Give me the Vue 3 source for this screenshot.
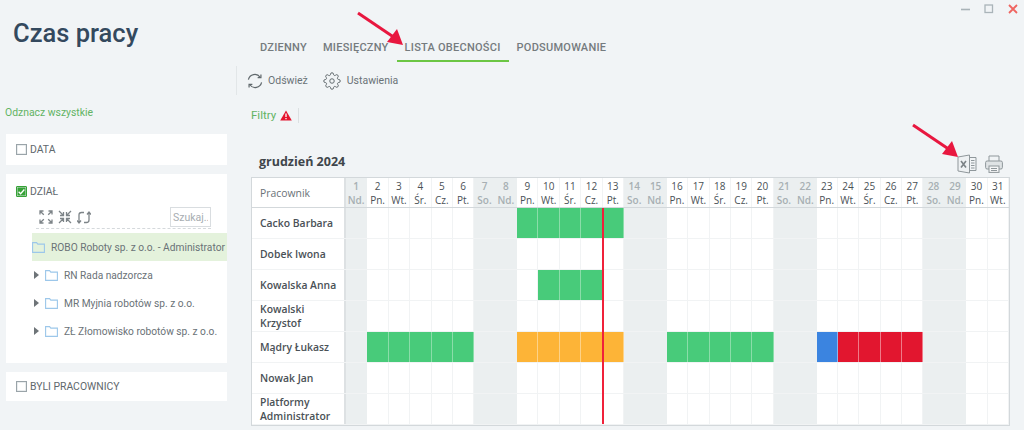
<script setup>
const tabs = ['Dzienny', 'Miesięczny', 'Lista obecności', 'Podsumowanie']
const activeTab = 'Lista obecności'

const weekdays = ['Nd.', 'Pn.', 'Wt.', 'Śr.', 'Cz.', 'Pt.', 'So.']
const days = Array.from({ length: 31 }, (_, i) => {
	const w = i % 7
	return { nr: i + 1, label: weekdays[w], off: w === 0 || w === 6 }
})

const fill = (from, to, color) => {
	const res = {}
	for (let d = from; d <= to; d++) res[d] = color
	return res
}

const rows = [
	{ name: 'Cacko Barbara', marks: fill(9, 13, 'green') },
	{ name: 'Dobek Iwona', marks: {} },
	{ name: 'Kowalska Anna', marks: fill(10, 12, 'green') },
	{ name: 'Kowalski Krzystof', marks: {} },
	{
		name: 'Mądry Łukasz',
		marks: {
			...fill(2, 6, 'green'),
			...fill(9, 13, 'orange'),
			...fill(16, 20, 'green'),
			...fill(23, 23, 'blue'),
			...fill(24, 27, 'red'),
		},
	},
	{ name: 'Nowak Jan', marks: {} },
	{ name: 'Platformy Administrator', marks: {} },
]

const tree = [
	{ text: 'RN Rada nadzorcza' },
	{ text: 'MR Myjnia robotów sp. z o.o.' },
	{ text: 'ZŁ Złomowisko robotów sp. z o.o.' },
]
</script>

<template>
	<div class="page">
		<aside class="side">
			<h1 class="title">Czas pracy</h1>
			<a class="uncheck">Odznacz wszystkie</a>

			<section class="panel panel-small">
				<span class="check"></span>
				<span class="panel-label">DATA</span>
			</section>

			<section class="panel panel-tree">
				<div class="panel-head">
					<span class="check checked">
						<svg width="11" height="11" viewBox="0 0 11 11"><path d="M2 5.800l2.400 2.400L9 3" fill="none" stroke="#fff" stroke-width="1.600" /></svg>
					</span>
					<span class="panel-label">DZIAŁ</span>
				</div>
				<div class="tree-tools">
					<svg width="14" height="14" viewBox="0 0 14 14" fill="none" stroke="#7d8488" stroke-width="1.300">
						<path d="M1 4.500V1h3.500M1.200 1.200l3.600 3.600M9.500 1H13v3.500M12.800 1.200L9.200 4.800M1 9.500V13h3.500M1.200 12.800l3.600-3.600M13 9.500V13H9.500M12.800 12.800L9.200 9.200" />
					</svg>
					<svg width="14" height="14" viewBox="0 0 14 14" fill="none" stroke="#7d8488" stroke-width="1.300">
						<path d="M5.500 2v3.500H2M1 1l4.500 4.500M8.500 2v3.500H12M13 1L8.500 5.500M5.500 12V8.500H2M1 13l4.500-4.500M8.500 12V8.500H12M13 13L8.500 8.500" />
					</svg>
					<svg width="14" height="15" viewBox="0 0 14 15" fill="none" stroke="#7d8488" stroke-width="1.300">
						<path d="M7 2.500H4.500A2.500 2.500 0 0 0 2 5v8M0 10.500l2 2.500 2-2.500M7 12.500h2.500A2.500 2.500 0 0 0 12 10V2M10 4.500L12 2l2 2.500" />
					</svg>
					<input class="tree-search" placeholder="Szukaj..." />
				</div>
				<div class="tree-row tree-selected">
					<svg class="folder" width="13" height="11" viewBox="0 0 13 11"><path d="M0.600 10.400V0.600h4l1.200 1.500h6.600v8.300z" fill="none" stroke="#9cc7ea" stroke-width="1.100" /></svg>
					<span class="tree-text">ROBO Roboty sp. z o.o. - Administrator</span>
				</div>
				<div v-for="item in tree" :key="item.text" class="tree-row tree-child">
					<span class="caret"></span>
					<svg class="folder" width="13" height="11" viewBox="0 0 13 11"><path d="M0.600 10.400V0.600h4l1.200 1.500h6.600v8.300z" fill="none" stroke="#9cc7ea" stroke-width="1.100" /></svg>
					<span class="tree-text">{{ item.text }}</span>
				</div>
			</section>

			<section class="panel panel-small panel-last">
				<span class="check"></span>
				<span class="panel-label">BYLI PRACOWNICY</span>
			</section>
		</aside>

		<main class="main">
			<div class="win-bar">
				<svg width="12" height="12" viewBox="0 0 12 12"><path d="M2 6.500h9" stroke="#a9b3b8" stroke-width="1.600" /></svg>
				<svg width="12" height="12" viewBox="0 0 12 12"><rect x="2" y="2" width="7.500" height="7.500" fill="none" stroke="#aab4b9" stroke-width="1.300" /></svg>
				<svg width="12" height="12" viewBox="0 0 12 12"><path d="M2 2l8 8M10 2l-8 8" stroke="#ef6560" stroke-width="1.800" /></svg>
			</div>

			<nav class="tabs">
				<a v-for="tab in tabs" :key="tab" class="tab" :class="{ active: tab === activeTab }">{{ tab }}</a>
			</nav>

			<div class="toolbar">
				<button class="tool">
					<svg width="16" height="16" viewBox="0 0 17 17" fill="none" stroke="#60686c" stroke-width="1.300">
						<path d="M1.500 7A7 7 0 0 1 14 4.500M15.500 10A7 7 0 0 1 3 12.500" />
						<path d="M14.800 1.500v3.500h-3.500M2.200 15.500V12h3.500" />
					</svg>
					<span>Odśwież</span>
				</button>
				<button class="tool tool-gear">
					<svg width="18" height="18" viewBox="0 0 24 24" fill="none" stroke="#60686c" stroke-width="1.300">
						<circle cx="12" cy="12" r="3" />
						<path d="M19.400 15a1.650 1.650 0 0 0 .33 1.820l.06.06a2 2 0 0 1 0 2.830 2 2 0 0 1-2.830 0l-.06-.06a1.650 1.650 0 0 0-1.820-.33 1.650 1.650 0 0 0-1 1.510V21a2 2 0 0 1-2 2 2 2 0 0 1-2-2v-.09A1.650 1.650 0 0 0 9 19.400a1.650 1.650 0 0 0-1.820.33l-.06.06a2 2 0 0 1-2.830 0 2 2 0 0 1 0-2.830l.06-.06a1.650 1.650 0 0 0 .33-1.820 1.650 1.650 0 0 0-1.510-1H3a2 2 0 0 1-2-2 2 2 0 0 1 2-2h.09A1.650 1.650 0 0 0 4.600 9a1.650 1.650 0 0 0-.33-1.820l-.06-.06a2 2 0 0 1 0-2.830 2 2 0 0 1 2.830 0l.06.06a1.650 1.650 0 0 0 1.820.33H9a1.650 1.650 0 0 0 1-1.510V3a2 2 0 0 1 2-2 2 2 0 0 1 2 2v.09a1.650 1.650 0 0 0 1 1.510 1.650 1.650 0 0 0 1.820-.33l.06-.06a2 2 0 0 1 2.830 0 2 2 0 0 1 0 2.830l-.06.06a1.650 1.650 0 0 0-.33 1.820V9a1.650 1.650 0 0 0 1.510 1H21a2 2 0 0 1 2 2 2 2 0 0 1-2 2h-.09a1.650 1.650 0 0 0-1.510 1z" />
					</svg>
					<span>Ustawienia</span>
				</button>
			</div>

			<div class="filters">
				<span class="filters-text">Filtry</span>
				<svg width="12" height="11" viewBox="0 0 12 11">
					<path d="M6 0.500L11.800 10.500H0.200z" fill="#e4142e" />
					<path d="M6 3.500v3.500M6 8v1.300" stroke="#fff" stroke-width="1.300" />
				</svg>
				<span class="filters-sep"></span>
			</div>

			<div class="month-bar">
				<span class="month">grudzień 2024</span>
				<div class="month-icons">
					<svg width="20" height="20" viewBox="0 0 20 20" fill="none" stroke="#8f979b" stroke-width="1">
						<path d="M12.500 1L1 3v14l11.500 2z" fill="#eef1f3" />
						<path d="M12.500 3.500H19v13h-6.500M14 6.500h3.500M14 9h3.500M14 11.500h3.500M14 14h3.500" />
						<path d="M4 7l5 6.500M9 7l-5 6.500" stroke-width="1.600" stroke="#7b8286" />
					</svg>
					<svg width="18" height="18" viewBox="0 0 18 18" fill="none" stroke="#8f979b" stroke-width="1">
						<path d="M4 6V1h10v5" />
						<rect x="0.600" y="6" width="16.800" height="8" rx="1.500" fill="#dfe3e5" />
						<rect x="4" y="11" width="10" height="6.400" fill="#f5f6f7" />
						<path d="M6 13.500h6M6 15.500h6" />
					</svg>
				</div>
			</div>

			<div class="sheet">
				<div class="row head">
					<div class="name-cell head-name">Pracownik</div>
					<div v-for="d in days" :key="d.nr" class="day head-day" :class="{ off: d.off }">
						<span>{{ d.nr }}</span>
						<span>{{ d.label }}</span>
					</div>
				</div>
				<div v-for="r in rows" :key="r.name" class="row">
					<div class="name-cell">{{ r.name }}</div>
					<div
						v-for="d in days"
						:key="d.nr"
						class="day"
						:class="[{ off: d.off }, r.marks[d.nr]]"
					></div>
				</div>
				<div class="today"></div>
			</div>
		</main>

		<svg class="arrow arrow-tabs" width="54" height="40" viewBox="0 0 54 40">
			<path d="M3 3L40 28" stroke="#e8173f" stroke-width="3" />
			<path d="M48 35L32 32L42 19z" fill="#e8173f" />
		</svg>
		<svg class="arrow arrow-excel" width="54" height="40" viewBox="0 0 54 40">
			<path d="M3 3L40 28" stroke="#e8173f" stroke-width="3" />
			<path d="M48 35L32 32L42 19z" fill="#e8173f" />
		</svg>
	</div>
</template>

<style>
	html,
	body {
		margin: 0;
		background: #f1f4f6;
	}
</style>

<style scoped>
	.page {
		position: relative;
		display: flex;
		width: 1024px;
		height: 430px;
		overflow: hidden;
		background: #f1f4f6;
		font-family: Roboto, "Liberation Sans", sans-serif;
		color: #5f686d;
	}

	.side {
		width: 236px;
		flex: none;
		box-sizing: border-box;
		padding-left: 6px;
		padding-right: 9px;
	}

	.title {
		margin: 16px 0 0 7px;
		font-size: 25.500px;
		line-height: 34px;
		font-weight: 500;
		color: #34495e;
	}

	.uncheck {
		display: block;
		margin: 56px 0 0 -1px;
		font-size: 10.400px;
		line-height: 14px;
		color: #62b363;
	}

	.panel {
		background: #fff;
		box-sizing: border-box;
	}

	.panel-small {
		display: flex;
		align-items: center;
		gap: 3px;
		height: 31px;
		margin-top: 14px;
		padding-left: 10px;
	}

	.panel-last {
		height: 29px;
		margin-top: 9px;
	}

	.panel-tree {
		height: 189px;
		margin-top: 9px;
		padding-top: 9px;
	}

	.panel-head {
		display: flex;
		align-items: center;
		gap: 3px;
		padding-left: 10px;
		height: 16px;
	}

	.panel-label {
		font-size: 10.400px;
		color: #5f686d;
	}

	.check {
		width: 9px;
		height: 9px;
		border: 1px solid #9aa4a9;
		box-shadow: inset 0 0 0 0.500px #d8dde0;
		background: #fff;
		flex: none;
	}

	.checked {
		display: flex;
		align-items: center;
		justify-content: center;
		background: #36a336;
		border-color: #36a336;
		border-radius: 1px;
	}

	.tree-tools {
		display: flex;
		align-items: center;
		gap: 5px;
		height: 22px;
		margin: 7px 16px 0 30px;
		padding: 0 0 0 3px;
		border-bottom: 1px dashed #d5d9dc;
	}

	.tree-search {
		width: 41px;
		height: 20px;
		box-sizing: border-box;
		margin-left: auto;
		padding: 0 2px;
		border: 1px solid #d9dde0;
		outline: none;
		font-family: inherit;
		font-size: 10.500px;
		background: #fff;
	}

	.tree-search::placeholder {
		color: #a7adb1;
		opacity: 1;
	}

	.tree-row {
		display: flex;
		align-items: center;
		height: 28px;
		font-size: 10.200px;
		white-space: nowrap;
		color: #6a7277;
	}

	.tree-selected {
		margin: 4px 0 0 26px;
		background: #e4f2dc;
	}

	.tree-child {
		padding-left: 28px;
	}

	.caret {
		width: 0;
		height: 0;
		border-left: 5px solid #6e7478;
		border-top: 4px solid transparent;
		border-bottom: 4px solid transparent;
		margin-right: 6px;
	}

	.folder {
		flex: none;
		margin-right: 6px;
	}

	.main {
		flex: 1;
		min-width: 0;
		padding-right: 14px;
	}

	.win-bar {
		display: flex;
		justify-content: flex-end;
		align-items: center;
		gap: 12px;
		height: 18px;
		margin-right: -9px;
	}

	.tabs {
		display: flex;
		height: 27px;
		margin: 17px 0 0 16px;
	}

	.tab {
		box-sizing: border-box;
		padding: 5px 8px 0;
		height: 27px;
		border-bottom: 2px solid transparent;
		font-size: 11px;
		line-height: 15px;
		font-weight: 500;
		letter-spacing: 0.250px;
		text-transform: uppercase;
		color: #757b7e;
	}

	.tab.active {
		border-bottom-color: #6cc644;
	}

	.toolbar {
		display: flex;
		align-items: center;
		height: 29px;
		margin-top: 4px;
		padding-left: 10px;
		border-left: 1px solid #e2e6e8;
		gap: 15px;
	}

	.tool {
		display: flex;
		align-items: center;
		gap: 5px;
		padding: 0;
		border: 0;
		background: none;
		font-family: inherit;
		font-size: 10.500px;
		color: #6a7277;
	}

	.tool-gear {
		gap: 6px;
	}

	.filters {
		display: flex;
		align-items: center;
		height: 16px;
		margin: 12px 0 0 15px;
	}

	.filters-text {
		margin-right: 4px;
		font-size: 11.500px;
		color: #62b363;
	}

	.filters-sep {
		width: 1px;
		height: 15px;
		margin-left: 6px;
		background: #dce0e2;
	}

	.month-bar {
		display: flex;
		align-items: center;
		justify-content: space-between;
		box-sizing: border-box;
		width: 744px;
		height: 32px;
		margin: 22px 0 0 23px;
	}

	.month {
		font-family: "Open Sans", sans-serif;
		font-weight: 700;
		font-size: 12.500px;
		color: #3f464b;
	}

	.month-icons {
		display: flex;
		align-items: center;
		gap: 8px;
		padding-top: 6px;
	}

	.sheet {
		position: relative;
		box-sizing: border-box;
		width: 759px;
		height: 249px;
		margin: 0 0 0 15px;
		border: 1px solid #d3d8db;
		border-bottom-width: 2px;
		background: #fff;
		font-family: "Open Sans", sans-serif;
	}

	.row {
		display: grid;
		grid-template-columns: 94px repeat(31, 1fr);
		height: 31px;
		box-sizing: border-box;
		border-bottom: 1px solid #f1f3f4;
	}

	.row:last-of-type {
		border-bottom: 0;
	}

	.row.head {
		height: 30px;
		border-bottom: 1px solid #d3d8db;
	}

	.name-cell {
		display: flex;
		align-items: center;
		box-sizing: border-box;
		padding-left: 8px;
		border-right: 2px solid #dde1e3;
		font-size: 10.400px;
		line-height: 14px;
		font-weight: 600;
		color: #4a5156;
	}

	.name-cell.head-name {
		font-weight: 400;
		color: #6a7277;
	}

	.day {
		box-sizing: border-box;
		border-right: 1px solid #f1f3f4;
	}

	.head-day {
		display: flex;
		flex-direction: column;
		align-items: center;
		justify-content: center;
		font-size: 10px;
		line-height: 14px;
		color: #4a5156;
		white-space: nowrap;
	}

	.day.off {
		background: #ebeff0;
		border-right-color: #ebeff0;
	}

	.head-day.off {
		color: #a7afb3;
		font-weight: 600;
	}

	.day.green {
		background: #48cb7a;
		border-right-color: #8bdda9;
	}

	.day.orange {
		background: #fdb437;
		border-right-color: #fdd288;
	}

	.day.blue {
		background: #3b84e0;
		border-right-color: #8db6ec;
	}

	.day.red {
		background: #e2162f;
		border-right-color: #ef7a88;
	}

	.today {
		position: absolute;
		left: 350px;
		top: 30px;
		bottom: 0;
		width: 2px;
		background: #f0213a;
	}

	.arrow {
		position: absolute;
		pointer-events: none;
	}

	.arrow-tabs {
		left: 355px;
		top: 10px;
	}

	.arrow-excel {
		left: 910px;
		top: 122px;
	}
</style>
